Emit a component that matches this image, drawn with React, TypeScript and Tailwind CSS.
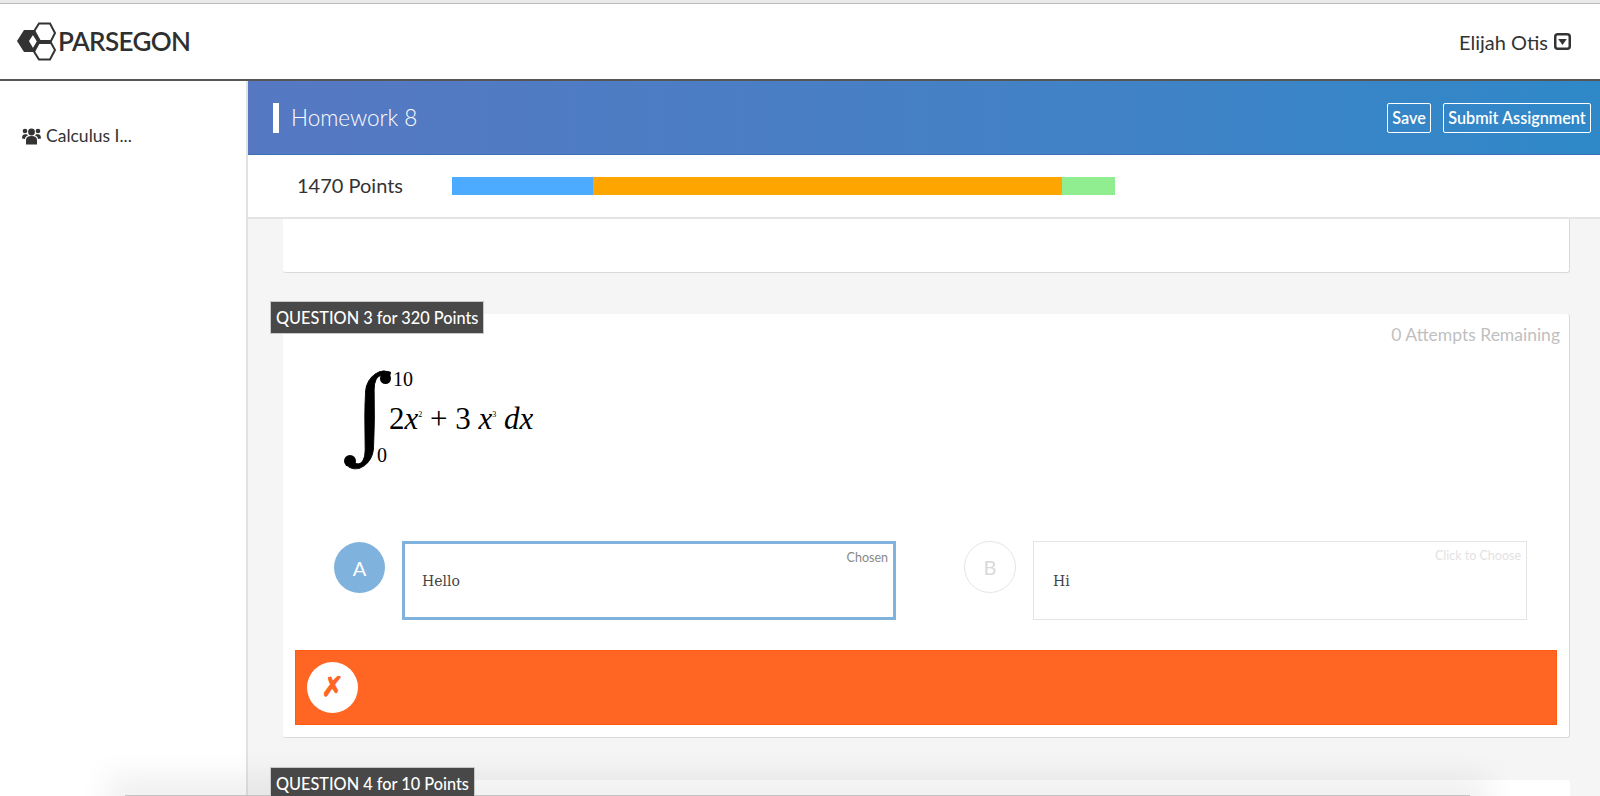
function Logo() {
  return (
    <svg viewBox="0 0 40 40" className="w-[40px] h-[40px]" fill="none" stroke="#333" strokeWidth="2">
      <path d="M0 19 L7 8 L18 8 L24 19 L18 30 L7 30 Z" fill="#333" stroke="none" />
      <path d="M12 19 L16 13 L20 19 L16 26 Z" fill="#fff" stroke="none" />
      <path d="M16 11 L22 1.5 L33 1.5 L38 11 L33 21 L22 21 Z" />
      <path d="M16 28 L22 19 L33 19 L38 28 L33 37.5 L22 37.5 Z" />
    </svg>
  );
}

function UsersIcon() {
  return (
    <svg viewBox="0 0 19 18" className="w-[19px] h-[18px]" fill="#333">
      <circle cx="9.5" cy="5" r="3.4" />
      <circle cx="3" cy="4" r="2.3" />
      <circle cx="16" cy="4" r="2.3" />
      <path d="M4 17.5 V13 Q4 9 9.5 9 Q15 9 15 13 V17.5 Z" />
      <path d="M0 11.5 Q0 7.2 3 7.2 L5 7.2 Q5.5 8 6 8.5 Q3 9.5 3 12 Z" />
      <path d="M19 11.5 Q19 7.2 16 7.2 L14 7.2 Q13.5 8 13 8.5 Q16 9.5 16 12 Z" />
    </svg>
  );
}

function CaretBox() {
  return (
    <svg viewBox="0 0 17 17" className="w-[17px] h-[17px]">
      <rect x="1.25" y="1.25" width="14.5" height="14.5" rx="2.5" fill="none" stroke="#333" strokeWidth="2.5" />
      <path d="M4.2 6 H12.8 L8.5 12 Z" fill="#333" />
    </svg>
  );
}

function Option({ letter, text, chosen }: { letter: string; text: string; chosen?: boolean }) {
  return (
    <div className="flex w-[562px]">
      <div
        className={
          chosen
            ? "w-[51px] h-[51px] mt-px rounded-full bg-[#7fb3de] text-white flex items-center justify-center text-[20px] shrink-0"
            : "w-[52px] h-[52px] rounded-full border border-[#e6e6e6] text-[#d9d9d9] flex items-center justify-center text-[20px] shrink-0"
        }
      >
        {letter}
      </div>
      <div
        className={
          chosen
            ? "ml-[17px] w-[494px] h-[79px] shrink-0 border-[3px] border-[#7fb3de] relative pl-[17px] pt-[27px]"
            : "ml-[17px] w-[494px] h-[79px] shrink-0 border border-[#e4e4e4] relative pl-[19px] pt-[29px]"
        }
      >
        <p className="font-['DejaVu_Serif',serif] text-[14px] leading-[20px] text-[#444]">{text}</p>
        <span
          className={
            chosen
              ? "absolute top-[6px] right-[5px] text-[12.5px] leading-[16px] text-[#888]"
              : "absolute top-[6px] right-[5px] text-[12.5px] leading-[16px] text-[#e2e2e2]"
          }
        >
          {chosen ? "Chosen" : "Click to Choose"}
        </span>
      </div>
    </div>
  );
}

function QuestionLabel({ children }: { children: string }) {
  return (
    <div className="relative z-10 inline-block bg-[#484848] border border-white/70 text-white text-[16.3px] leading-[30px] pt-px px-[5px] font-medium">
      {children}
    </div>
  );
}

function Formula() {
  return (
    <div className="flex items-start h-[120px] font-['Liberation_Serif',serif] text-black">
      <div className="relative w-[46px] h-[110px] shrink-0">
        <span className="absolute left-[11px] -top-[10px] origin-left scale-x-110 text-[100px] leading-[110px] font-bold [-webkit-text-stroke:0.8px_black]">
          ∫
        </span>
        <span className="absolute left-[36px] top-[9px] w-[11px] h-[11px] rounded-full bg-black" />
        <span className="absolute left-0 top-[91px] w-[12px] h-[12px] rounded-full bg-black" />
      </div>
      <div className="relative w-[200px] h-[110px]">
        <span className="absolute left-[3px] top-0 text-[20px]">10</span>
        <span className="absolute -left-[13px] top-[76px] text-[20px]">0</span>
        <p className="absolute -left-[1px] top-[35px] text-[31px] leading-[40px] whitespace-nowrap">
          2<i>x</i>
          <sup className="text-[8px] -top-[12px]">2</sup> + 3 <i>x</i>
          <sup className="text-[8px] -top-[12px]">3</sup> <i>dx</i>
        </p>
      </div>
    </div>
  );
}

export default function App() {
  return (
    <div className="relative h-[796px] w-[1600px] overflow-hidden bg-white font-['Lato',sans-serif] text-[#333]">
      <div className="h-[4px] bg-[#e9e9e9] border-b border-[#bbb]" />
      <header className="h-[77px] flex items-center justify-between border-b-2 border-[#555] pl-[17px] pr-[29px]">
        <div className="flex items-center gap-[1px]">
          <Logo />
          <span className="text-[26px] font-semibold tracking-tight text-[#2f2f2f]">PARSEGON</span>
        </div>
        <div className="flex items-center gap-[6px] text-[20px]">
          Elijah Otis
          <CaretBox />
        </div>
      </header>

      <div className="flex h-[715px]">
        <aside className="w-[248px] shrink-0 border-r-2 border-[#e2e2e2] pl-[22px] pt-[42px]">
          <div className="flex items-center gap-[5px] text-[17.5px] text-[#333]">
            <UsersIcon />
            Calculus I...
          </div>
        </aside>

        <main className="flex-1 min-w-0">
          <div className="h-[74px] bg-gradient-to-r from-[#5678c2] to-[#2e88c8] flex items-center justify-between pl-[25px] pr-[9px] border-b border-[#3c6fb5]">
            <div className="flex items-center text-white text-[22.5px] font-light">
              <span className="w-[6px] h-[30px] bg-white mr-[12px]" />
              Homework 8
            </div>
            <div className="flex gap-[12px] text-white text-[16.2px] font-semibold">
              <button className="h-[30px] w-[44px] pt-px border border-white rounded-[2px]">Save</button>
              <button className="h-[30px] w-[148px] pt-px border border-white rounded-[2px]">Submit Assignment</button>
            </div>
          </div>

          <div className="h-[64px] flex items-center pl-[49px] border-b-2 border-[#e4e4e4] bg-white">
            <span className="text-[20px] w-[155px] -mt-[2px] text-[#333]">1470 Points</span>
            <div className="flex h-[18px] w-[663px]">
              <div className="w-[141px] bg-[#4dabff]" />
              <div className="w-[469px] bg-[#ffa500]" />
              <div className="flex-1 bg-[#90ee90]" />
            </div>
          </div>

          <div className="h-[577px] bg-[#f5f5f5] overflow-hidden pl-[22px] pr-[30px]">
            <div className="ml-[13px] h-[54px] bg-white rounded-b-[3px] border-b border-r border-[#d9d9d9]" />

            <div className="mt-[28px]">
              <QuestionLabel>QUESTION 3 for 320 Points</QuestionLabel>
              <div className="ml-[13px] -mt-[20px] h-[424px] bg-white rounded-[3px] border-b border-r border-[#d9d9d9] relative pt-[50px]">
                <span className="absolute top-[8px] right-[9px] text-[17.5px] text-[#bfbfbf]">0 Attempts Remaining</span>
                <div className="pl-[61px]">
                  <Formula />
                </div>
                <div className="flex gap-[68px] pl-[51px] mt-[57px]">
                  <Option letter="A" text="Hello" chosen />
                  <Option letter="B" text="Hi" />
                </div>
                <div className="mx-[12px] mt-[30px] h-[75px] bg-[#ff6523] border border-[#ff5a10] flex items-center pl-[11px]">
                  <div className="w-[51px] h-[51px] rounded-full bg-white flex items-center justify-center text-[#ff6523] text-[27px] font-['DejaVu_Sans',sans-serif] [-webkit-text-stroke:1px_#ff6523]">
                    ✗
                  </div>
                </div>
              </div>
            </div>

            <div className="mt-[29px]">
              <QuestionLabel>QUESTION 4 for 10 Points</QuestionLabel>
              <div className="ml-[13px] -mt-[20px] h-[200px] bg-white rounded-[3px]" />
            </div>
          </div>
        </main>
      </div>

      {/* window shadow creeping in from the bottom of the capture */}
      <div className="absolute left-[125px] right-[130px] bottom-0 h-px bg-[#c4c4c4] shadow-[0_0_32px_18px_rgba(0,0,0,0.07)]" />
    </div>
  );
}
